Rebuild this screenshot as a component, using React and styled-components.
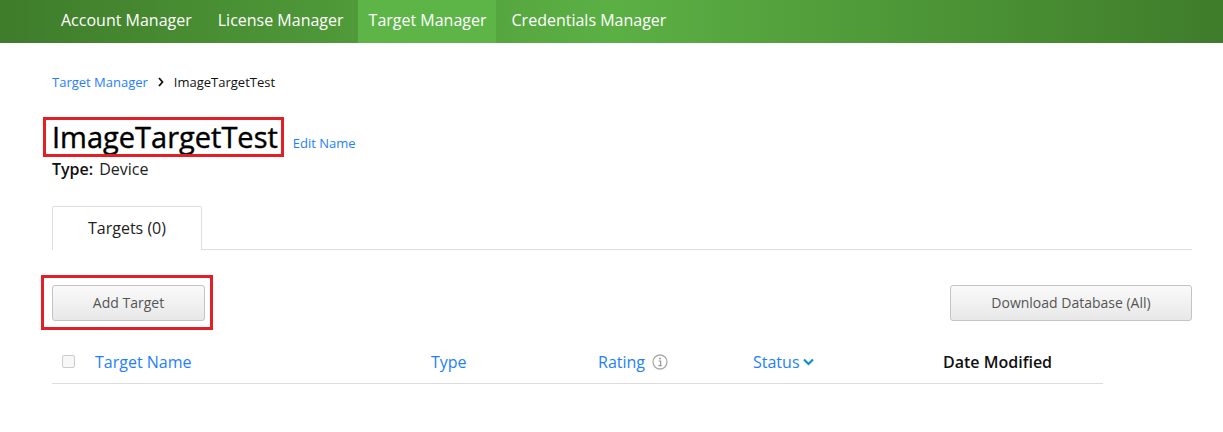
import styled, { createGlobalStyle } from "styled-components";

const GlobalStyle = createGlobalStyle`
  html, body {
    margin: 0;
    padding: 0;
    background: #fff;
    font-family: "Open Sans", "Liberation Sans", sans-serif;
  }
`;

const NAV_ITEMS = ["Account Manager", "License Manager", "Target Manager", "Credentials Manager"];

const COLUMNS = [
  { name: "Target Name", width: 336 },
  { name: "Type", width: 167 },
  { name: "Rating", width: 155, info: true },
  { name: "Status", width: 190, sort: true },
  { name: "Date Modified", plain: true },
];

export default function App() {
  return (
    <>
      <GlobalStyle />
      <NavBar>
        {NAV_ITEMS.map((item) => (
          <NavItem key={item} $active={item === "Target Manager"}>
            {item}
          </NavItem>
        ))}
      </NavBar>
      <Page>
        <Breadcrumb>
          <CrumbLink>Target Manager</CrumbLink>
          <CrumbArrow viewBox="0 0 8 10">
            <path d="M2 1l3.5 4L2 9" fill="none" stroke="#111" strokeWidth="1.8" />
          </CrumbArrow>
          <span>ImageTargetTest</span>
        </Breadcrumb>
        <TitleRow>
          <Title>ImageTargetTest</Title>
          <EditLink>Edit Name</EditLink>
        </TitleRow>
        <TypeRow>
          <strong>Type:</strong>
          <span>Device</span>
        </TypeRow>
        <TabStrip>
          <Tab>Targets (0)</Tab>
        </TabStrip>
        <Actions>
          <AddButton>Add Target</AddButton>
          <DownloadButton>Download Database (All)</DownloadButton>
        </Actions>
        <TableHead>
          <CheckBox />
          {COLUMNS.map((col) => (
            <Column key={col.name} $width={col.width} $plain={col.plain}>
              {col.name}
              {col.info && (
                <InfoIcon viewBox="0 0 16 16">
                  <circle cx="8" cy="8" r="7" fill="none" stroke="#aaa" strokeWidth="1.3" />
                  <path d="M6.6 7h2v4.4M6.4 11.6h3.4" fill="none" stroke="#999" strokeWidth="1.2" />
                  <circle cx="8" cy="4.6" r="1" fill="#999" />
                </InfoIcon>
              )}
              {col.sort && (
                <SortIcon viewBox="0 0 11 8">
                  <path d="M1 1.5l4.5 4.5L10 1.5" fill="none" stroke="#0f8fd0" strokeWidth="2.2" />
                </SortIcon>
              )}
            </Column>
          ))}
        </TableHead>
      </Page>
    </>
  );
}

const NavBar = styled.nav`
  display: flex;
  gap: 5px;
  height: 43px;
  padding-left: 51px;
  background: linear-gradient(90deg, #3f7c2a 0%, #5bb044 50%, #3f7c2a 100%);
`;

const NavItem = styled.a`
  padding: ${(props) => (props.$active ? "0 9px 0 11px" : "0 10px")};
  margin: ${(props) => (props.$active ? "0 1px 0 -1px" : "0")};
  line-height: 41px;
  font-size: 16px;
  color: #fff;
  background: ${(props) => (props.$active ? "#5db547" : "transparent")};
  &:first-child {
    padding-right: 11px;
  }
`;

const Page = styled.main`
  padding: 30px 31px 0 52px;
`;

const Breadcrumb = styled.div`
  display: flex;
  align-items: center;
  height: 18px;
  font-size: 13px;
  color: #111;
`;

const CrumbLink = styled.a`
  color: #1e80ff;
`;

const CrumbArrow = styled.svg`
  width: 8px;
  height: 10px;
  margin: 0 9px 0 9px;
`;

const TitleRow = styled.div`
  display: flex;
  align-items: flex-end;
  margin-top: 27px;
  height: 38px;
`;

const Title = styled.h1`
  position: relative;
  margin: 0;
  font-size: 29px;
  line-height: 38px;
  font-weight: 400;
  -webkit-text-stroke: 0.4px #000;
  color: #000;
  &::after {
    content: "";
    position: absolute;
    inset: -1px -6px -1px -9px;
    border: 3px solid #e21f26;
  }
`;

const EditLink = styled.a`
  margin: 0 0 4px 15px;
  font-size: 13px;
  color: #1e80ff;
`;

const TypeRow = styled.div`
  display: flex;
  gap: 6px;
  height: 24px;
  line-height: 24px;
  margin-top: 1px;
  font-size: 16px;
  color: #222;
  strong {
    font-weight: 600;
    color: #111;
  }
`;

const TabStrip = styled.div`
  display: flex;
  margin-top: 25px;
  height: 43px;
  border-bottom: 1px solid #ddd;
`;

const Tab = styled.div`
  width: 148px;
  height: 43px;
  line-height: 43px;
  text-align: center;
  font-size: 16px;
  color: #222;
  background: #fff;
  border: 1px solid #ddd;
  border-bottom: none;
  border-radius: 2px 2px 0 0;
`;

const Actions = styled.div`
  display: flex;
  justify-content: space-between;
  margin-top: 35px;
`;

const Button = styled.button`
  position: relative;
  height: 36px;
  padding: 0 0 2px;
  font-family: inherit;
  font-size: 14px;
  color: #555;
  background: linear-gradient(180deg, #fafafa 0%, #e8e8e8 100%);
  border: 1px solid #c4c4c4;
  border-radius: 3px;
`;

const AddButton = styled(Button)`
  width: 153px;
  &::after {
    content: "";
    position: absolute;
    inset: -11px -9px -10px -12px;
    border: 3px solid #e21f26;
  }
`;

const DownloadButton = styled(Button)`
  width: 242px;
`;

const TableHead = styled.div`
  display: flex;
  align-items: center;
  width: 1051px;
  height: 43px;
  margin-top: 19px;
  border-bottom: 1px solid #ddd;
`;

const CheckBox = styled.span`
  width: 11px;
  height: 11px;
  margin: 0 20px 0 10px;
  background: #f7f7f7;
  border: 1px solid #ccc;
  border-radius: 2px;
`;

const Column = styled.a`
  display: flex;
  align-items: center;
  flex: none;
  width: ${(props) => (props.$width ? `${props.$width}px` : "auto")};
  font-size: 16px;
  font-weight: ${(props) => (props.$plain ? 600 : 400)};
  color: ${(props) => (props.$plain ? "#111" : "#1e80ff")};
`;

const InfoIcon = styled.svg`
  width: 16px;
  height: 16px;
  margin-left: 7px;
`;

const SortIcon = styled.svg`
  width: 11px;
  height: 8px;
  margin-left: 3px;
`;
